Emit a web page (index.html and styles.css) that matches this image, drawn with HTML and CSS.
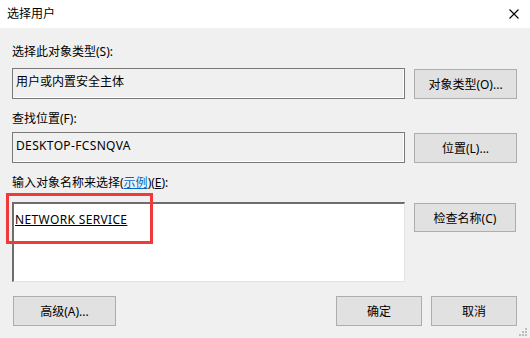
FILE: index.html
```html
<!DOCTYPE html>
<html lang="zh-CN">
<head>
    <meta charset="UTF-8">
    <title>选择用户</title>
    <link rel="stylesheet" href="styles.css">
</head>
<body>
    <div class="dialog">
        <div class="title-bar">
            <span class="title">选择用户</span>
            <svg class="close" width="10" height="10" viewBox="0 0 10 10">
                <path d="M0.5 0.5 L9.5 9.5 M9.5 0.5 L0.5 9.5" stroke="#000" stroke-width="1.1" fill="none"/>
            </svg>
        </div>

        <div class="content">
            <div class="label label-types">选择此对象类型(S):</div>
            <div class="row row-types">
                <div class="field">用户或内置安全主体</div>
                <button class="btn">对象类型(O)...</button>
            </div>

            <div class="label label-location">查找位置(F):</div>
            <div class="row row-location">
                <div class="field"><span class="latin">DESKTOP-FCSNQVA</span></div>
                <button class="btn">位置(L)...</button>
            </div>

            <div class="label label-names">输入对象名称来选择(<span class="link">示例</span>)(<u>E</u>):</div>
            <div class="row row-names">
                <div class="field input">
                    <span class="entry latin">NETWORK SERVICE</span>
                    <div class="highlight"></div>
                </div>
                <div class="side">
                    <button class="btn btn-check">检查名称(C)</button>
                </div>
            </div>

            <div class="footer">
                <button class="btn btn-advanced">高级(A)...</button>
                <div class="spacer"></div>
                <button class="btn btn-small">确定</button>
                <button class="btn btn-small">取消</button>
            </div>
        </div>

        <div class="grip">
            <i style="left: 6px; top: 0;"></i>
            <i style="left: 3px; top: 3px;"></i>
            <i style="left: 6px; top: 3px;"></i>
            <i style="left: 0; top: 6px;"></i>
            <i style="left: 3px; top: 6px;"></i>
            <i style="left: 6px; top: 6px;"></i>
        </div>
    </div>
</body>
</html>
```

FILE: styles.css
```css
html, body {
    margin: 0;
    padding: 0;
}

body {
    width: 530px;
    height: 338px;
    overflow: hidden;
    font-family: "Noto Sans", "Noto Sans CJK SC", sans-serif;
    font-size: 12px;
    color: #000;
}

.dialog {
    position: relative;
    width: 530px;
    height: 338px;
    background-color: #f0f0f0;
}

.title-bar {
    height: 28px;
    background-color: #fff;
    display: flex;
    align-items: center;
    padding: 0 11px 0 7px;
}

.title {
    flex: 1;
    line-height: 16px;
}

.close {
    display: block;
}

.content {
    padding: 0 13px 0 12px;
    display: flex;
    flex-direction: column;
}

.label {
    height: 16px;
    line-height: 16px;
}

.label-types {
    margin-top: 16px;
}

.label-location {
    margin-top: 12px;
}

.label-names {
    margin-top: 12px;
}

.link {
    color: #0066cc;
    text-decoration: underline;
}

.latin {
    letter-spacing: 0.35px;
}

.row {
    display: grid;
    grid-template-columns: 393px 103px;
    column-gap: 9px;
    align-items: start;
}

.row-types {
    margin-top: 8px;
}

.row-location {
    margin-top: 5px;
}

.row-names {
    margin-top: 11px;
}

.field {
    box-sizing: border-box;
    height: 31px;
    padding: 5px 3px;
    line-height: 16px;
    border: 1px solid #7a7a7a;
    box-shadow: inset -1px -1px 0 #fff;
}

.field.input {
    position: relative;
    height: 80px;
    padding: 8px 1px;
    background-color: #fff;
    border: 1px solid #e3e3e3;
    border-top: 2px solid #6d6d6d;
    border-left: 2px solid #6d6d6d;
    box-shadow: none;
}

.entry {
    text-decoration: underline;
}

/* riquadro rosso di evidenziazione */
.highlight {
    position: absolute;
    left: -8px;
    top: -11px;
    width: 141px;
    height: 45px;
    border: 3px solid #f03a3a;
}

.btn {
    box-sizing: border-box;
    height: 30px;
    margin-top: 1px;
    padding: 0;
    background-color: #e1e1e1;
    border: 1px solid #adadad;
    font-family: inherit;
    font-size: 12px;
    color: #000;
}

.side {
    display: flex;
}

.btn-check {
    width: 102px;
    height: 29px;
}

.footer {
    display: flex;
    gap: 9px;
    margin-top: 14px;
}

.footer .btn {
    margin-top: 0;
}

.btn-advanced {
    width: 103px;
    margin-left: 1px;
}

.spacer {
    flex: 1;
}

.btn-small {
    width: 86px;
}

.grip {
    position: absolute;
    right: 3px;
    bottom: 2px;
    width: 8px;
    height: 8px;
}

.grip i {
    position: absolute;
    width: 2px;
    height: 2px;
    background-color: #bcbcbc;
}
```
